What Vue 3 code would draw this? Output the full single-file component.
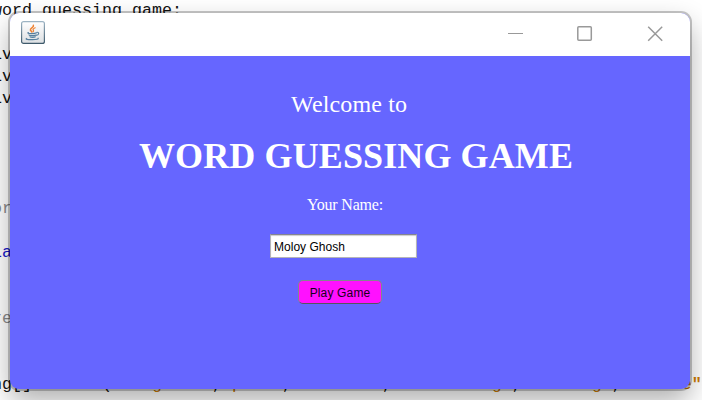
<script setup>
import { ref } from 'vue'

const name = ref('Moloy Ghosh')

const codeLines = [
  [{ text: 'word guessing game:' }],
  [],
  [{ text: 'iv' }],
  [{ text: 'iv' }],
  [{ text: 'iv' }],
  [],
  [],
  [],
  [],
  [{ text: 'or', kind: 'comment' }],
  [],
  [{ text: 'la', kind: 'keyword' }],
  [],
  [],
  [{ text: 're', kind: 'comment' }],
  [],
  [],
  [
    { text: 'ng[] = new (' },
    { text: '"longhorn"', kind: 'string' }, { text: ',' },
    { text: '"pear"', kind: 'string' }, { text: ',' },
    { text: '"android"', kind: 'string' }, { text: ',' },
    { text: '"networking"', kind: 'string' }, { text: ',' },
    { text: '"testing"', kind: 'string' }, { text: ',' },
    { text: '"source', kind: 'string' },
    { text: '"', kind: 'string quote' },
  ],
]
</script>

<template>
  <main class="desktop">
    <div class="editor" aria-hidden="true">
      <div v-for="(line, i) in codeLines" :key="i" class="line">
        <span v-for="(part, j) in line" :key="j" :class="part.kind">{{ part.text }}</span>
      </div>
    </div>

    <section class="window">
      <header class="titlebar">
        <svg class="java" width="24" height="23" viewBox="0 0 24 23">
          <defs>
            <linearGradient id="tile" x1="0" y1="0" x2="0" y2="1">
              <stop offset="0" stop-color="#ffffff" />
              <stop offset="1" stop-color="#dcdfe2" />
            </linearGradient>
            <linearGradient id="edge" x1="0" y1="0" x2="0" y2="1">
              <stop offset="0" stop-color="#9db4c4" />
              <stop offset="1" stop-color="#3f5a6b" />
            </linearGradient>
          </defs>
          <rect x="0.6" y="0.6" width="22.8" height="21.8" rx="2" fill="url(#tile)" stroke="url(#edge)" stroke-width="1.2" />
          <g fill="none" stroke="#ee8130" stroke-linecap="round">
            <path d="M12.4 4.2c.9 2.3-3.5 2.9-3 4.8.2.8 1.4 1.3 1.5 2.1" stroke-width="1.5" />
            <path d="M14.2 6.8c-1.8.8-2.8 1.7-1.8 2.5.4.4.1 1-.3 1.4" stroke-width="1.1" />
          </g>
          <g fill="none" stroke="#56809f" stroke-width="1.1" stroke-linecap="round">
            <path d="M7.4 11.5c-1.4.6-.4 1.2 3.2 1.1 2.3 0 4.3-.4 5-.8" />
            <path d="M8 13.8c.3 1.1 6.3 1 7.2.2M9 15.8c.8.7 4.4.7 5.4 0" />
            <path d="M16 11.3c2.6-.3 2 2.7-.6 3" />
            <path d="M5.8 17.4c-2.2.9 1.2 1.3 5.7 1.2 4.1 0 6.4-.6 5.6-1.4" />
          </g>
        </svg>
        <div class="controls">
          <svg width="16" height="16" viewBox="0 0 16 16"><path d="M1 7.5h15" /></svg>
          <svg width="16" height="16" viewBox="0 0 16 16"><rect x=".8" y=".8" width="13.5" height="13.5" rx="1" class="thick" /></svg>
          <svg width="16" height="16" viewBox="0 0 16 16"><path d="M1.2 .8l14 14M15.2 .8l-14 14" class="thick" /></svg>
        </div>
      </header>

      <form class="content" @submit.prevent>
        <p class="welcome">Welcome to</p>
        <h1>WORD GUESSING GAME</h1>
        <label for="player">Your Name:</label>
        <input id="player" v-model="name" type="text" spellcheck="false" />
        <button type="submit">Play Game</button>
      </form>
    </section>
  </main>
</template>

<style>
body {
  overflow: hidden;
}
</style>

<style scoped>
.desktop {
  position: relative;
  box-sizing: border-box;
  width: 702px;
  height: 400px;
  padding: 13px 12px 11px 10px;
  overflow: hidden;
  background: #ffffff;
}
.editor {
  position: absolute;
  top: 0;
  left: -8px;
  font: 16.67px/22px "Liberation Mono", monospace;
  color: #111;
}
.line {
  height: 22px;
  white-space: pre;
}
.comment {
  color: #8b8b8b;
}
.keyword {
  color: #1515c8;
}
.string {
  color: #ce7b00;
}
.quote {
  font-weight: bold;
}
.window {
  position: relative;
  display: flex;
  flex-direction: column;
  height: 376px;
  border-radius: 9px;
  background: #6666ff;
  box-shadow: 0 0 0 2px rgba(0, 0, 0, 0.22), 0 12px 28px rgba(0, 0, 0, 0.32);
}
.titlebar {
  display: flex;
  justify-content: space-between;
  box-sizing: border-box;
  height: 43px;
  padding: 8px 27px 0 11px;
  border-radius: 9px 9px 0 0;
  background: #fff;
}
.controls {
  display: flex;
  gap: 54px;
  padding-top: 5px;
}
.controls svg {
  fill: none;
  stroke: #999;
  stroke-width: 1;
}
.controls .thick {
  stroke-width: 1.5;
}
.content {
  display: flex;
  flex-direction: column;
  align-items: flex-start;
  color: #fff;
  font-family: "Liberation Serif", serif;
}
.welcome {
  margin: 34px 0 0 281px;
  font-size: 24px;
  line-height: 28px;
  letter-spacing: 0.15px;
}
h1 {
  margin: 17px 0 0 129px;
  font-size: 36px;
  font-weight: bold;
  line-height: 42px;
  letter-spacing: 0.11px;
  white-space: nowrap;
}
label {
  margin: 18px 0 0 297px;
  font-size: 16px;
  line-height: 20px;
  letter-spacing: -0.2px;
}
input {
  box-sizing: border-box;
  width: 147px;
  height: 24px;
  margin: 19px 0 0 260px;
  padding: 1px 3px 0;
  border: 1px solid #b4b4b8;
  border-top-color: #858590;
  border-radius: 0;
  outline: none;
  background: #fff;
  box-shadow: inset 0 1px 1px #ccc;
  color: #000;
  font: 12px "Liberation Sans", sans-serif;
  letter-spacing: 0.02px;
}
button {
  box-sizing: border-box;
  width: 84px;
  height: 24px;
  margin: 22px 0 0 288px;
  padding: 1px 0 0;
  border: 1px solid #85858f;
  border-bottom-color: #555560;
  border-radius: 5px;
  background: #ff11ff;
  color: #16001a;
  font: 12px "Liberation Sans", sans-serif;
  letter-spacing: 0.15px;
}
</style>
